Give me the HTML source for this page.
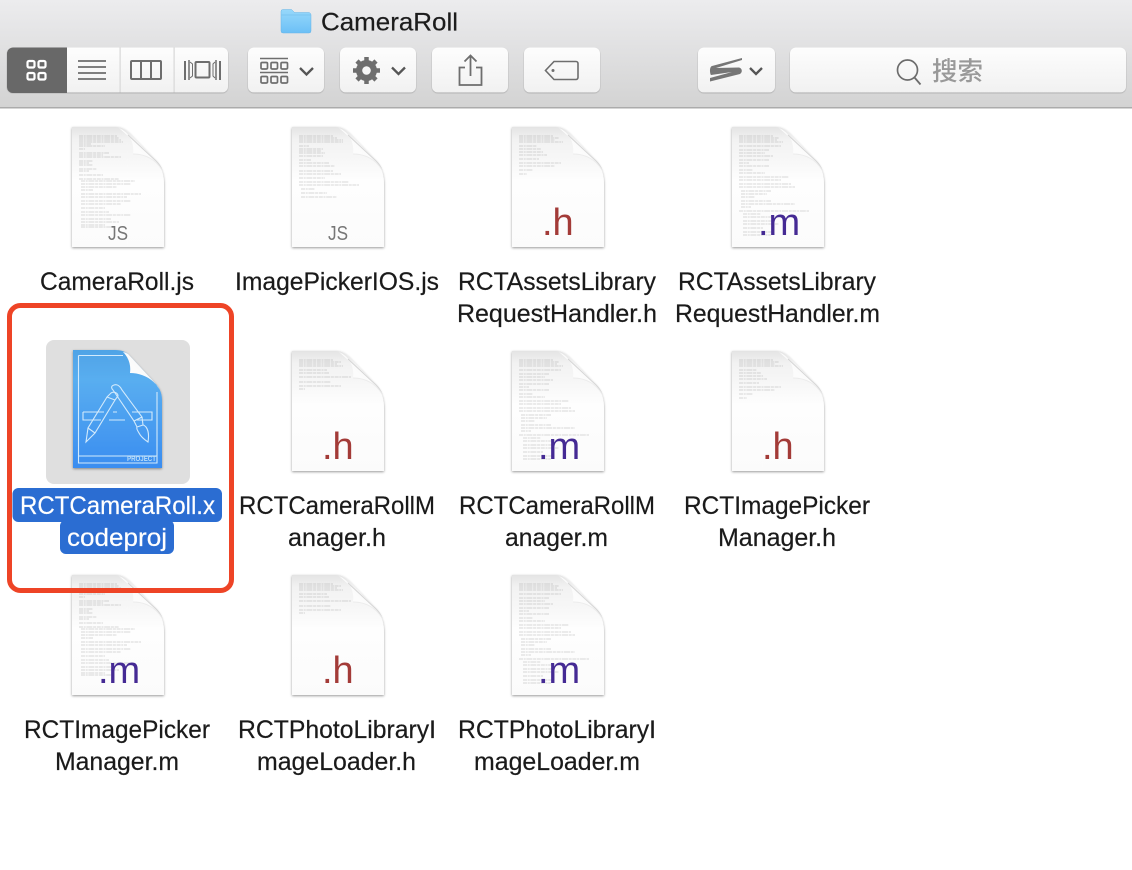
<!DOCTYPE html>
<html><head><meta charset="utf-8"><style>
html,body{margin:0;padding:0;background:#fff;width:1132px;height:870px;overflow:hidden}
svg{display:block}
.l{font-family:"Liberation Sans",sans-serif;font-size:25px;fill:#1a1a1a;stroke:#1a1a1a;stroke-width:.2}
.w{fill:#fff;stroke:#fff}
.tx{fill:none;stroke:#777;stroke-width:.6;stroke-dasharray:4 .7 2 .7 6 .7 3 .7;stroke-opacity:.55}
</style></head><body>
<svg width="1132" height="870" viewBox="0 0 1132 870" xmlns="http://www.w3.org/2000/svg">
<defs>
<linearGradient id="tb" x1="0" y1="0" x2="0" y2="1"><stop offset="0" stop-color="#ececee"/><stop offset="1" stop-color="#d3d3d3"/></linearGradient>
<linearGradient id="bt" x1="0" y1="0" x2="0" y2="1"><stop offset="0" stop-color="#fdfdfd"/><stop offset="1" stop-color="#f1f1f1"/></linearGradient>
<linearGradient id="fo" x1="0" y1="0" x2="0" y2="1"><stop offset="0" stop-color="#97d8fb"/><stop offset="1" stop-color="#6cc0f6"/></linearGradient>
<linearGradient id="bl" x1="0" y1="0" x2="0" y2="1"><stop offset="0" stop-color="#4fa3e6"/><stop offset=".25" stop-color="#59aef0"/><stop offset="1" stop-color="#3a8df0"/></linearGradient>
<linearGradient id="pg" x1="0" y1="0" x2="0" y2="1"><stop offset="0" stop-color="#e4e4e4"/><stop offset=".1" stop-color="#f2f2f2"/><stop offset=".27" stop-color="#f7f7f7"/><stop offset=".45" stop-color="#fefefe"/><stop offset="1" stop-color="#fbfbfb"/></linearGradient>
<linearGradient id="fl" x1="0" y1="1" x2="1" y2="0"><stop offset="0" stop-color="#fff"/><stop offset=".65" stop-color="#fafafa"/><stop offset="1" stop-color="#cfcfcf"/></linearGradient>
<filter id="s" x="-10%" y="-10%" width="120%" height="120%"><feDropShadow dx="0" dy="1" stdDeviation="1.300" flood-color="#000" flood-opacity=".4"/></filter>
<filter id="b" x="-5%" y="-5%" width="110%" height="110%"><feGaussianBlur stdDeviation=".3"/></filter>
<filter id="bs" x="-5%" y="-5%" width="110%" height="115%"><feDropShadow dx="0" dy=".6" stdDeviation=".5" flood-color="#000" flood-opacity=".3"/></filter>
<g id="page">
<path d="M0 0H44C50 0 54 3 58 7L84 34C90 41 92 48 92 58V120H0Z" fill="url(#pg)" filter="url(#s)"/>
</g>
<g id="flap">
<path d="M47 1L84 34C87 37 89 40 90 43C84 33 74 27 61 27C62 20 60 12 56 8C54 5 51 3 47 1Z" fill="url(#fl)"/>
<path d="M56 8L84 34C87 37 89 40 90 43" fill="none" stroke="#d6d6d6" stroke-width="1" filter="url(#b)"/>
<path d="M61 27C74 27 84 33 90 43" fill="none" stroke="#ececec" stroke-width="1" filter="url(#b)"/>
</g>
<path id="t1" class="tx" filter="url(#b)" d="M7 9h38M7 11h40M7 13h42M7 15h44M7 17h12M7 19h26M7 22h6M7 26h30M7 28h24M7 30h42M7 34h14M7 36h10M7 38h14M7 42h18M7 44h10M7 48h24M7 52h40M9 54h54M9 57h50M9 60h36M9 63h12M9 67h60M9 70h46M9 74h50M9 77h40M9 81h24M9 85h28M9 88h50M9 92h30M9 95h38M9 98h24M9 100h30"/>
<path id="t2" class="tx" filter="url(#b)" d="M7 9h34M7 11h42M7 13h38M7 15h44M7 19h28M7 22h30M7 26h52M7 31h32M7 35h42M7 38h6"/>
<path id="t3" class="tx" filter="url(#b)" d="M7 9h34M7 11h40M7 13h38M7 15h44M7 19h42M7 23h30M7 26h26M7 29h34M7 33h30M7 36h10M7 39h30M7 43h14M7 46h26M7 50h50M7 53h42M7 57h52M7 60h56M9 64h30M9 67h26M9 70h14M9 74h30M9 77h54M9 80h10M7 84h70M11 87h18M11 90h36M11 94h30M11 97h36M11 101h20M11 105h30M11 108h28"/>
<path id="t4" class="tx" filter="url(#b)" d="M7 9h34M7 11h38M7 13h44M7 15h44M7 19h10M7 22h24M7 24h22M7 26h26M7 29h24M7 33h12M7 36h30M7 39h36M7 44h34M7 47h42M7 51h26M7 55h50M7 58h60M9 62h14M9 66h26M9 70h36"/>
<path id="t5" class="tx" filter="url(#b)" d="M7 9h34M7 11h40M7 13h36M7 15h44M7 19h18M7 22h22M7 25h24M7 28h28M7 32h20M7 36h42M7 39h36M7 43h14M7 47h8"/>
<g id="dh" font-family="Liberation Sans,sans-serif" font-size="38" fill="#a33b38"><text x="30" y="108">.h</text></g>
<g id="dm" font-family="Liberation Sans,sans-serif" font-size="38" fill="#452a94"><text x="26" y="108">.m</text></g>
<g id="dj" font-family="Liberation Sans,sans-serif" font-size="20" fill="#777"><text x="36" y="113" textLength="20" lengthAdjust="spacingAndGlyphs">JS</text></g>
</defs>

<rect width="1132" height="107" fill="url(#tb)"/>
<rect y="107" width="1132" height="1.500" fill="#ababab"/>

<!-- title -->
<path d="M281 11.500a2 2 0 0 1 2-2h8.500l3 3h14a2.500 2.500 0 0 1 2.500 2.500v16a2 2 0 0 1-2 2h-26a2 2 0 0 1-2-2Z" fill="url(#fo)" stroke="#6ab5e6" stroke-width=".5"/>
<rect x="281" y="14.500" width="30" height="1" fill="#7cc5f0"/>
<text x="321" y="30.500" font-family="Liberation Sans,sans-serif" font-size="25" fill="#1c1c1c" stroke="#1c1c1c" stroke-width=".2" textLength="137" lengthAdjust="spacingAndGlyphs">CameraRoll</text>

<!-- view segment -->
<rect x="7" y="47.500" width="221" height="45" rx="6" fill="url(#bt)" filter="url(#bs)"/>
<path d="M67 47.500H13a6 6 0 0 0-6 6V87a6 6 0 0 0 6 6H67Z" fill="#686868"/>
<rect x="119.500" y="47.500" width="1.200" height="45" fill="#d8d8d8"/>
<rect x="173.500" y="47.500" width="1.200" height="45" fill="#d8d8d8"/>
<g fill="none" stroke="#fff" stroke-width="2.200"><rect x="27.500" y="61" width="7" height="6.500" rx="1.500"/><rect x="38.500" y="61" width="7" height="6.500" rx="1.500"/><rect x="27.500" y="73" width="7" height="6.500" rx="1.500"/><rect x="38.500" y="73" width="7" height="6.500" rx="1.500"/></g>
<path d="M78 61h28M78 67h28M78 73h28M78 79h28" stroke="#6e6e6e" stroke-width="1.800" fill="none"/>
<g fill="none" stroke="#6e6e6e" stroke-width="2"><rect x="131" y="61" width="30" height="18" rx="1"/><path d="M141 61v18M151 61v18"/></g>
<g fill="none" stroke="#6e6e6e"><path d="M185 61v19" stroke-width="2"/><path d="M189 60v20" stroke-width="1.500"/><path d="M190 62l2.500 2v12l-2.500 2" stroke-width="1"/><rect x="195.500" y="62" width="14" height="15.500" rx="1" stroke-width="2"/><path d="M215 62l-2 2v12l2 2" stroke-width="1"/><path d="M216 60v20" stroke-width="1.500"/><path d="M220 61v19" stroke-width="2"/></g>

<!-- buttons -->
<rect x="248" y="47.500" width="76" height="45" rx="6" fill="url(#bt)" filter="url(#bs)"/>
<rect x="340" y="47.500" width="76" height="45" rx="6" fill="url(#bt)" filter="url(#bs)"/>
<rect x="432" y="47.500" width="76" height="45" rx="6" fill="url(#bt)" filter="url(#bs)"/>
<rect x="524" y="47.500" width="76" height="45" rx="6" fill="url(#bt)" filter="url(#bs)"/>
<rect x="698" y="47.500" width="77" height="45" rx="6" fill="url(#bt)" filter="url(#bs)"/>
<rect x="790" y="47.500" width="336" height="45" rx="6" fill="url(#bt)" filter="url(#bs)"/>

<!-- arrange -->
<g fill="none" stroke="#6e6e6e"><path d="M260 58.500h28M260 72.500h28" stroke-width="1.600"/><g stroke-width="1.700"><rect x="261" y="62.500" width="6.500" height="6.500" rx="1.200"/><rect x="271" y="62.500" width="6.500" height="6.500" rx="1.200"/><rect x="281" y="62.500" width="6.500" height="6.500" rx="1.200"/><rect x="261" y="76.500" width="6.500" height="6.500" rx="1.200"/><rect x="271" y="76.500" width="6.500" height="6.500" rx="1.200"/><rect x="281" y="76.500" width="6.500" height="6.500" rx="1.200"/></g></g>
<path d="M300 68l6.500 6.500 6.500-6.500" fill="none" stroke="#555" stroke-width="2.300"/>
<!-- gear -->
<circle cx="366.500" cy="70.500" r="10.500" fill="#6e6e6e"/>
<g stroke="#6e6e6e" stroke-width="4.500"><path d="M366.500 57v27M353 70.500h27M357 61l19 19M376 61l-19 19"/></g>
<circle cx="366.500" cy="70.500" r="4.300" fill="#f7f7f7"/>
<path d="M392 67.500l6.500 6.500 6.500-6.500" fill="none" stroke="#555" stroke-width="2.300"/>
<!-- share -->
<path d="M465 67.500h-5.500v17.500h22v-17.500h-5.500M470.500 76V56M464.500 61.500l6-6 6 6" fill="none" stroke="#6e6e6e" stroke-width="1.800"/>
<!-- tag -->
<path d="M554 61.500h22a2 2 0 0 1 2 2v14a2 2 0 0 1-2 2h-22l-8.500-9Z" fill="none" stroke="#6e6e6e" stroke-width="1.600"/>
<circle cx="553" cy="70.500" r="1.500" fill="#6e6e6e"/>
<!-- S -->
<path d="M742 58L712 66C709 67 710 74 711 75L732 72L710 78V81.500L740 74C743 72 742 68 739 67.500L716 68L742 60Z" fill="#767676"/>
<path d="M750 68l6 6 6-6" fill="none" stroke="#555" stroke-width="2.300"/>
<!-- search -->
<circle cx="907.500" cy="70" r="10" fill="none" stroke="#6c6c6c" stroke-width="1.700"/>
<path d="M914.500 77.500l6 7" stroke="#6c6c6c" stroke-width="1.800"/>
<text x="932" y="80" font-family="'Noto Sans CJK SC',sans-serif" font-size="25.500" font-weight="500" fill="#999" textLength="51">搜索</text>

<!-- Row 1 -->
<g transform="translate(72,127)"><use href="#page"/><use href="#t1"/><use href="#flap"/><use href="#dj"/></g>
<g transform="translate(292,127)"><use href="#page"/><use href="#t4"/><use href="#flap"/><use href="#dj"/></g>
<g transform="translate(512,127)"><use href="#page"/><use href="#t5"/><use href="#flap"/><use href="#dh"/></g>
<g transform="translate(732,127)"><use href="#page"/><use href="#t3"/><use href="#flap"/><use href="#dm"/></g>
<!-- Row 2 -->
<rect x="46" y="340" width="144" height="144" rx="8" fill="#dfdfdf"/>
<g transform="translate(73,350)">
<path d="M0 0H42C49 0 53 2 56 5L82 33C87 38 89 44 89 50V118H0Z" fill="url(#bl)" filter="url(#s)"/>
<g fill="none" stroke="#d2eafc" stroke-width="1.100">
<path d="M5.500 5.500H50M84 42V113H5.500V5.500M5.500 106H84"/>
<path d="M10 62H31M40 62H44M59 62H79V70H64M28 70H10V62M36 70H52"/>
<path d="M13 92L15 78L34 47L42 50L22 83ZM34 47L38 43C41 41 45 43 45 46L42 50M15 78L22 83"/>
<path d="M40 40L61 71L69 67L49 40C47 36 44 34 41 35C38 36 38 38 40 40ZM61 71L64 77L70 75L69 67M64 77C63 79 65 81 66 83C68 87 72 90 75 92C76 86 76 81 73 77C72 76 71 75 70 75"/>
</g>
<text x="54" y="111" font-family="Liberation Sans,sans-serif" font-size="7.500" font-weight="bold" fill="#b9dcf8" textLength="29" lengthAdjust="spacingAndGlyphs">PROJECT</text>
<path d="M50 2C55 3 56 5 57 6L82 33C83 35 85 36 86 39C80 28 68 23 57 23C58 15 56 8 50 2Z" fill="url(#fl)"/>
</g>
<g transform="translate(292,351)"><use href="#page"/><use href="#t2"/><use href="#flap"/><use href="#dh"/></g>
<g transform="translate(512,351)"><use href="#page"/><use href="#t3"/><use href="#flap"/><use href="#dm"/></g>
<g transform="translate(732,351)"><use href="#page"/><use href="#t5"/><use href="#flap"/><use href="#dh"/></g>
<!-- Row 3 -->
<g transform="translate(72,575)"><use href="#page"/><use href="#t1"/><use href="#flap"/><use href="#dm"/></g>
<g transform="translate(292,575)"><use href="#page"/><use href="#t2"/><use href="#flap"/><use href="#dh"/></g>
<g transform="translate(512,575)"><use href="#page"/><use href="#t3"/><use href="#flap"/><use href="#dm"/></g>

<!-- selection -->
<rect x="12.500" y="488" width="209.500" height="34" rx="6" fill="#2b6dd2"/>
<rect x="60" y="520" width="114" height="34" rx="6" fill="#2b6dd2"/>

<!-- labels -->
<g>
<text class="l" x="40" y="290" textLength="154" lengthAdjust="spacingAndGlyphs">CameraRoll.js</text>
<text class="l" x="235" y="290" textLength="204" lengthAdjust="spacingAndGlyphs">ImagePickerIOS.js</text>
<text class="l" x="458" y="290" textLength="198" lengthAdjust="spacingAndGlyphs">RCTAssetsLibrary</text>
<text class="l" x="457" y="322" textLength="200" lengthAdjust="spacingAndGlyphs">RequestHandler.h</text>
<text class="l" x="678" y="290" textLength="198" lengthAdjust="spacingAndGlyphs">RCTAssetsLibrary</text>
<text class="l" x="675" y="322" textLength="205" lengthAdjust="spacingAndGlyphs">RequestHandler.m</text>

<text class="l w" x="20" y="514" textLength="195" lengthAdjust="spacingAndGlyphs">RCTCameraRoll.x</text>
<text class="l w" x="67" y="546" textLength="100" lengthAdjust="spacingAndGlyphs">codeproj</text>
<text class="l" x="239" y="514" textLength="196" lengthAdjust="spacingAndGlyphs">RCTCameraRollM</text>
<text class="l" x="288" y="546" textLength="98" lengthAdjust="spacingAndGlyphs">anager.h</text>
<text class="l" x="459" y="514" textLength="196" lengthAdjust="spacingAndGlyphs">RCTCameraRollM</text>
<text class="l" x="505" y="546" textLength="103" lengthAdjust="spacingAndGlyphs">anager.m</text>
<text class="l" x="684" y="514" textLength="186" lengthAdjust="spacingAndGlyphs">RCTImagePicker</text>
<text class="l" x="718" y="546" textLength="118" lengthAdjust="spacingAndGlyphs">Manager.h</text>

<text class="l" x="24" y="738" textLength="186" lengthAdjust="spacingAndGlyphs">RCTImagePicker</text>
<text class="l" x="55" y="770" textLength="124" lengthAdjust="spacingAndGlyphs">Manager.m</text>
<text class="l" x="238" y="738" textLength="198" lengthAdjust="spacingAndGlyphs">RCTPhotoLibraryI</text>
<text class="l" x="257" y="770" textLength="159" lengthAdjust="spacingAndGlyphs">mageLoader.h</text>
<text class="l" x="458" y="738" textLength="198" lengthAdjust="spacingAndGlyphs">RCTPhotoLibraryI</text>
<text class="l" x="474" y="770" textLength="166" lengthAdjust="spacingAndGlyphs">mageLoader.m</text>
</g>

<!-- red box -->
<rect x="9.500" y="305.500" width="222" height="285" rx="11" fill="none" stroke="#ee4426" stroke-width="5"/>
</svg>
</body></html>
